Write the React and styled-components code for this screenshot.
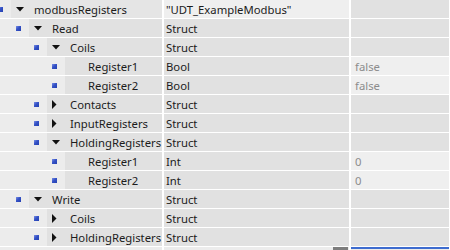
import React from 'react'
import styled, { createGlobalStyle } from 'styled-components'

const GlobalStyle = createGlobalStyle`
    html, body {
        margin: 0;
        padding: 0;
        background: #ffffff;
        overflow: hidden;
    }
    body {
        font-family: "Noto Sans", "Open Sans", sans-serif;
        font-size: 11.3px;
        color: #1c1c1c;
    }
`

const Table = styled.div`
    width: 450px;
    height: 250px;
    display: flex;
    flex-direction: column;
    gap: 1px;
    background: #ffffff;
    overflow: hidden;
`

const Row = styled.div`
    display: grid;
    grid-template-columns: 162px 185px 98px;
    column-gap: 2px;
    height: ${p => p.$h || 18}px;
    flex-shrink: 0;
`

const NameCell = styled.div`
    display: flex;
    overflow: hidden;
    background: #e1e1e1;
`

const Indent = styled.div`
    width: ${p => p.$level * 18 + 11}px;
    flex-shrink: 0;
    display: flex;
    align-items: center;
    justify-content: flex-end;
    padding-right: 8px;
    box-sizing: border-box;
    background: #ececec;
`

const Bullet = styled.span`
    width: 5px;
    height: 5px;
    flex-shrink: 0;
    background: linear-gradient(135deg, #7b90e4 0%, #3552c6 45%, #2440b0 100%);
`

const Item = styled.div`
    flex: 1;
    display: flex;
    align-items: center;
    background: ${p => p.$bg || '#e1e1e1'};
    white-space: nowrap;
`

const Toggle = styled.span`
    width: 23px;
    flex-shrink: 0;
    display: flex;
    align-items: center;
    padding-left: 5px;
    box-sizing: border-box;
`

const Cell = styled.div`
    display: flex;
    align-items: center;
    padding-left: ${p => p.$pad || 2}px;
    background: ${p => (p.$light ? '#efefef' : '#e1e1e1')};
    color: ${p => (p.$muted ? '#8c8c8c' : '#1c1c1c')};
    white-space: nowrap;
    overflow: hidden;
`

const Down = () => (
    <svg width="8" height="5" viewBox="0 0 8 5">
        <polygon points="0,0 8,0 4,4.5" fill="#111" />
    </svg>
)

const Right = () => (
    <svg width="5" height="9" viewBox="0 0 5 9">
        <polygon points="0,0 4.5,4.5 0,9" fill="#111" />
    </svg>
)

const FootCell = styled.div`
    background: #ececec;
    position: relative;
    border-top: ${p => (p.$focus ? '2px solid #3e6ccf' : 'none')};
    box-sizing: border-box;
`

const Grip = styled.span`
    position: absolute;
    right: 1px;
    top: 0;
    width: 15px;
    height: 3px;
    background: #7d7d7d;
`

const rows = [
    { level: 0, name: 'modbusRegisters', type: '"UDT_ExampleModbus"', open: true, top: true },
    { level: 1, name: 'Read', type: 'Struct', open: true },
    { level: 2, name: 'Coils', type: 'Struct', open: true },
    { level: 3, name: 'Register1', type: 'Bool', value: 'false' },
    { level: 3, name: 'Register2', type: 'Bool', value: 'false' },
    { level: 2, name: 'Contacts', type: 'Struct', open: false },
    { level: 2, name: 'InputRegisters', type: 'Struct', open: false },
    { level: 2, name: 'HoldingRegisters', type: 'Struct', open: true },
    { level: 3, name: 'Register1', type: 'Int', value: '0' },
    { level: 3, name: 'Register2', type: 'Int', value: '0' },
    { level: 1, name: 'Write', type: 'Struct', open: true },
    { level: 2, name: 'Coils', type: 'Struct', open: false },
    { level: 2, name: 'HoldingRegisters', type: 'Struct', open: false },
]

const App = () => {
    return (
        <>
            <GlobalStyle />
            <Table>
                {rows.map((r, i) => (
                    <Row key={i}>
                        <NameCell>
                            <Indent $level={r.level}>
                                <Bullet />
                            </Indent>
                            <Item $bg={r.top ? '#e5e5e5' : undefined}>
                                <Toggle>
                                    {r.open === true && <Down />}
                                    {r.open === false && <Right />}
                                </Toggle>
                                {r.name}
                            </Item>
                        </NameCell>
                        <Cell $light={r.top}>{r.type}</Cell>
                        <Cell $light={r.value !== undefined} $muted $pad={4}>
                            {r.value}
                        </Cell>
                    </Row>
                ))}
                <Row $h={3}>
                    <FootCell />
                    <FootCell>
                        <Grip />
                    </FootCell>
                    <FootCell $focus />
                </Row>
            </Table>
        </>
    )
}

export default App
